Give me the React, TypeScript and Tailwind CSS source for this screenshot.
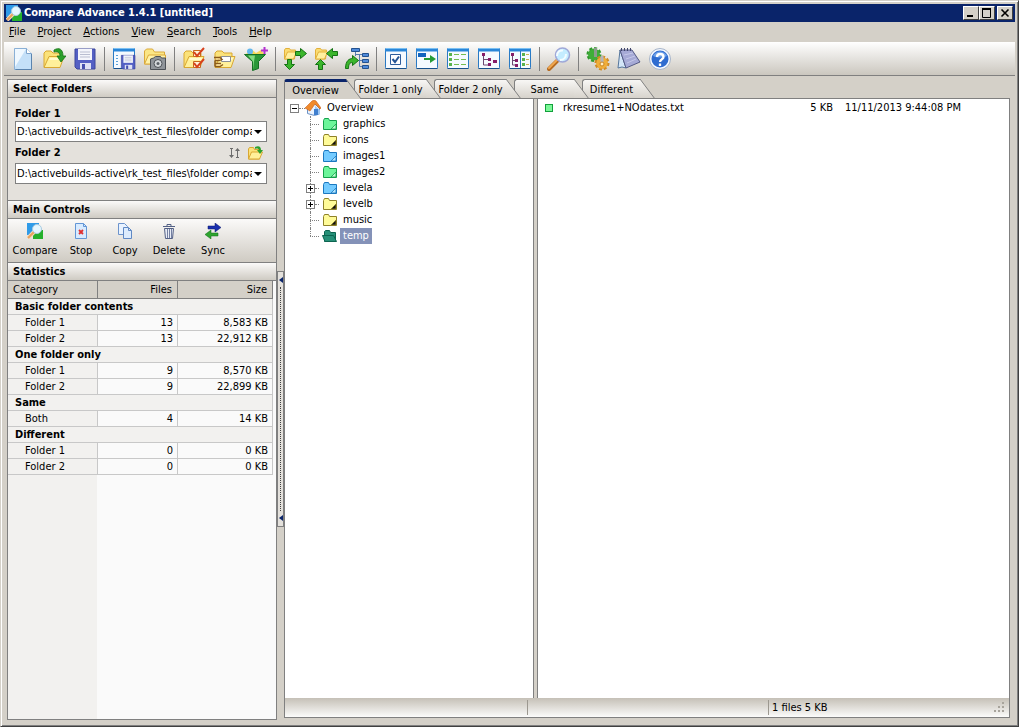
import type { ReactNode } from 'react'

interface IconProps {
  children: ReactNode
  size?: 'sm' | 'lg'
}

function Icon({ children, size = 'lg' }: IconProps) {
  return size === 'lg' ? (
    <svg viewBox="0 0 24 24" className="w-6 h-6 shrink-0" fill="none" aria-hidden="true">
      {children}
    </svg>
  ) : (
    <svg viewBox="0 0 16 16" className="w-4 h-4 shrink-0" fill="none" aria-hidden="true">
      {children}
    </svg>
  )
}

/* shared shapes */

function OpenFolder() {
  return (
    <>
      <path d="M2 20V6l2-2h5l2 2h8v4" fill="#fbe27a" stroke="#d9a832" />
      <path d="M2 20.500l5-11h15l-4 11z" fill="#fff09a" stroke="#d9a832" />
      <path d="M8 11h12l-1 2H7z" fill="#fffbd0" />
    </>
  )
}

function SmallFolder() {
  return (
    <>
      <path d="M1.500 12V3l1-1.500h4l1 1.500h5l-1 9z" fill="#fbdc72" stroke="#e2b03a" />
      <path d="M1.500 12l3-7h9l-3 7z" fill="#fff0a0" stroke="#e2b03a" />
    </>
  )
}

function WindowFrame() {
  return (
    <>
      <rect x="1.500" y="1.500" width="21" height="20" rx="1" fill="#f5faff" stroke="#2a7ac4" />
      <path d="M1 3h22" stroke="#2a86d8" strokeWidth="3" />
      <path d="M2 1.500h20" stroke="#7cc0f2" />
      <path d="M1.500 21.500h21" stroke="#16508c" />
    </>
  )
}

function Floppy() {
  return (
    <>
      <path d="M2 2h20v20H4l-2-2z" fill="#5460c4" stroke="#3c469c" />
      <path d="M5 2h14v11H5z" fill="#f4f5fb" />
      <path d="M7 5h10M7 7.500h10M7 10h10" stroke="#b9bdd0" />
      <path d="M7 16h11v6H7z" fill="#dfe2f4" />
      <path d="M9 17h3v5H9z" fill="#454fae" />
    </>
  )
}

function CompareArt() {
  return (
    <>
      <path d="M0 0h12v12H0z" fill="#2f9be8" />
      <path d="M6 7h10v9H6z" fill="#25b02c" />
      <path d="M1 15l6-6" stroke="#f3d9bd" strokeWidth="4" />
      <path d="M1 15l6-6" stroke="#e8a35c" strokeWidth="2" />
      <circle cx="10" cy="6" r="4.500" fill="#e4f6ff" stroke="#a9cbe0" />
    </>
  )
}

const ARROW_RIGHT = 'M12.500 4.500h5v-3l6 5-6 5v-3h-5z'
const ARROW_LEFT = 'M23.500 4.500h-5v-3l-6 5 6 5v-3h5z'
const ARROW_DOWN = 'M4.500 12.500h4v5h3l-5 5-5-5h3z'
const ARROW_UP = 'M4.500 22.500h4v-5h3l-5-5-5 5h3z'

interface Tool {
  label: string
  art: ReactNode
}

const TOOL_GROUPS: Tool[][] = [
  [
    {
      label: 'New',
      art: (
        <>
          <path d="M3.500 1.500h12l5 5v16h-17z" fill="#c4e0f8" stroke="#8ab0d6" />
          <path d="M4 2h11l-11 18z" fill="#eff8ff" />
          <path d="M15.500 1.500v5h5" fill="#fff" stroke="#7fa5cc" />
          <path d="M20.500 7v15.500h-16" stroke="#5b84ae" />
        </>
      ),
    },
    {
      label: 'Open',
      art: (
        <>
          <OpenFolder />
          <path d="M12 3c5-3 9-1 9 6h3l-5 6-4-6h3c0-3-2-5-6-4z" fill="#2ba02b" stroke="#167316" strokeWidth="0.800" />
        </>
      ),
    },
    { label: 'Save', art: <Floppy /> },
  ],
  [
    {
      label: 'Save project',
      art: (
        <>
          <WindowFrame />
          <path d="M4 8.500h2M4 11.500h2M4 14.500h2M4 17.500h2" stroke="#59a0d8" />
          <g transform="translate(8 7) scale(0.680)">
            <Floppy />
          </g>
        </>
      ),
    },
    {
      label: 'Snapshot',
      art: (
        <>
          <path d="M1.500 17V4l2-2h6l2 3h10v12z" fill="#fbe685" stroke="#dba93a" />
          <path d="M1.500 17l4-9h17v9z" fill="#fff2a8" stroke="#dba93a" />
          <path d="M7.500 12l3-1 2-1.500h5l1 1.500h4v11.500h-15z" fill="#90959a" stroke="#4c5156" />
          <circle cx="15" cy="16.500" r="4" fill="#d3d7da" stroke="#4c5156" />
          <circle cx="15" cy="16.500" r="1.500" fill="#5a6066" />
        </>
      ),
    },
  ],
  [
    {
      label: 'Select files',
      art: (
        <>
          <OpenFolder />
          <path d="M11.500 3.500h7v6h-7zM11.500 14.500h7v6h-7z" fill="#fff4d8" stroke="#c8681c" />
          <path d="M12 5l3 4 7-8M12 16l3 4 7-8" stroke="#d8401c" strokeWidth="2" />
        </>
      ),
    },
    {
      label: 'Rename',
      art: (
        <>
          <OpenFolder />
          <path d="M8.500 9.500h9v5h-9z" fill="#fff" stroke="#8b8f96" />
          <path d="M1 10.500h6l2 2-3 1H2M2 13.500v6M2 16.500h6M2 19.500h5l3-2" stroke="#8a5a1c" strokeWidth="1.400" />
          <path d="M3 11.500h4v1H3zM3 17.500h4v1H3z" fill="#f8d8a0" />
        </>
      ),
    },
    {
      label: 'Filter',
      art: (
        <>
          <path d="M2 7l5-5 5 4 5-3 4 5z" fill="#f5d858" />
          <circle cx="6" cy="4.500" r="3" fill="#65b8ee" />
          <path d="M0.500 7.500h21l-7 7v7l-6 2v-9z" fill="#2a9838" stroke="#147024" />
          <path d="M4 8.500h7l-1 6v8l-1-8z" fill="#83dc83" />
          <path d="M20.500 0v7M17 3.500h7" stroke="#b330cf" strokeWidth="2" />
        </>
      ),
    },
  ],
  [
    {
      label: 'Copy right',
      art: (
        <>
          <SmallFolder />
          <path d={ARROW_RIGHT} fill="#3bb52c" stroke="#157315" />
          <path d={ARROW_DOWN} fill="#3bb52c" stroke="#157315" />
        </>
      ),
    },
    {
      label: 'Copy left',
      art: (
        <>
          <SmallFolder />
          <path d={ARROW_LEFT} fill="#3bb52c" stroke="#157315" />
          <path d={ARROW_UP} fill="#3bb52c" stroke="#157315" />
        </>
      ),
    },
    {
      label: 'Go to folder',
      art: (
        <>
          <path d="M10.500 4v5M10.500 7.500h7M13 13.500h4M14.500 7.500v12h3" stroke="#587cae" />
          <path d="M6.500 1.500h8v3h-8zM17.500 6.500h6v3h-6zM17.500 12.500h6v3h-6zM17.500 18.500h6v3h-6z" fill="#4f8ada" stroke="#23528f" />
          <path d="M0.500 21.500c0-8 4-10 7-10v-3l6 5-6 5v-3c-3 0-4 2-4 6z" fill="#3bb52c" stroke="#157315" />
        </>
      ),
    },
  ],
  [
    {
      label: 'Options view',
      art: (
        <>
          <WindowFrame />
          <path d="M6.500 7.500h10v10h-10z" fill="#fff" stroke="#2e5d9c" />
          <path d="M8.500 12l2.500 3 4-5.500" stroke="#245494" strokeWidth="2" />
        </>
      ),
    },
    {
      label: 'Sync view',
      art: (
        <>
          <WindowFrame />
          <path d="M3 6h8v4H3z" fill="#1264be" />
          <path d="M9 11h6V8l6 4-6 4v-3H9z" fill="#259b35" />
        </>
      ),
    },
    {
      label: 'List view',
      art: (
        <>
          <WindowFrame />
          <path d="M3 6h3v3H3zM3 11h3v3H3zM3 16h3v3H3z" fill="#58b34e" />
          <path d="M8 7.500h5M15 7.500h5M8 12.500h5M15 12.500h5M8 17.500h5M15 17.500h5" stroke="#74bd50" />
        </>
      ),
    },
    {
      label: 'Tree view',
      art: (
        <>
          <WindowFrame />
          <path d="M6.500 9v9h5M6.500 12.500h6" stroke="#6d4771" />
          <path d="M5 6h3v3H5zM11 11h3v3h-3zM11 16h3v3h-3zM16 13h4v3h-4z" fill="#851d69" />
        </>
      ),
    },
    {
      label: 'Split view',
      art: (
        <>
          <WindowFrame />
          <path d="M4.500 8v10h3M4.500 13.500h3" stroke="#6d4771" />
          <path d="M3 6h3v3H3zM7 12h3v3H7zM7 17h3v3H7z" fill="#851d69" />
          <path d="M12.500 4v17" stroke="#2a7ac4" />
          <path d="M14 6h3v3h-3zM14 11h3v3h-3zM14 16h3v3h-3z" fill="#58b34e" />
          <path d="M18 7.500h3M18 12.500h3M18 17.500h3" stroke="#c7b44b" />
        </>
      ),
    },
  ],
  [
    {
      label: 'Find',
      art: (
        <>
          <path d="M2 22l8-8" stroke="#b66b20" strokeWidth="4" strokeLinecap="round" />
          <path d="M2 21l8-8" stroke="#f0a850" strokeWidth="2" strokeLinecap="round" />
          <circle cx="15.500" cy="8" r="7" fill="#c4ecff" stroke="#a0a8d8" strokeWidth="1.500" />
          <path d="M10 9c0-4 3-6 6-5.500M13 13c4 0 6-3 6-6" stroke="#f4fcff" strokeWidth="2" />
        </>
      ),
    },
  ],
  [
    {
      label: 'Settings',
      art: (
        <>
          <circle cx="8" cy="7.500" r="6" fill="#3fae38" />
          <circle cx="8" cy="7.500" r="6.500" stroke="#2f9a2c" strokeWidth="2" strokeDasharray="3 2" />
          <path d="M8 1h3v9H8z" fill="#8f9a90" />
          <circle cx="16" cy="16" r="6" fill="#f0ae3a" />
          <circle cx="16" cy="16" r="6.500" stroke="#d18c24" strokeWidth="2" strokeDasharray="3 2" />
          <path d="M14.500 9h3v7h-3z" fill="#b4b5bc" />
          <circle cx="16" cy="17" r="2" fill="#fff0c4" stroke="#cb8420" />
        </>
      ),
    },
    {
      label: 'Notes',
      art: (
        <>
          <path d="M3 3L1 21l4-1 4 1z" fill="#d3e6f8" stroke="#56769c" />
          <path d="M3 3h12l8 12-14 6z" fill="#a6aad6" stroke="#555b85" />
          <path d="M4.500 1v3M7.500 1v3M10.500 1v3M13.500 1v3" stroke="#40466b" />
          <path d="M7 8l9-2M9 12l9-3M10 16l9-4" stroke="#c4c8e8" />
        </>
      ),
    },
    {
      label: 'Help',
      art: (
        <>
          <circle cx="12" cy="12" r="10.500" fill="#f5f9ff" stroke="#a6b4ca" />
          <circle cx="12" cy="12" r="8.500" fill="#2f6cd0" />
          <path d="M5 9c3-6 11-6 14 0-5 2-9 2-14 0z" fill="#6fa2ea" />
          <path d="M9 10c0-4 6.500-4 6.500 0 0 2.500-3.500 2-3.500 5M12 16.500v2.500" stroke="#fff" strokeWidth="2.300" />
        </>
      ),
    },
  ],
]

const MENU_ITEMS = ['File', 'Project', 'Actions', 'View', 'Search', 'Tools', 'Help']

const CONTROLS: Tool[] = [
  { label: 'Compare', art: <CompareArt /> },
  {
    label: 'Stop',
    art: (
      <>
        <path d="M2.500 0.500h8l3 3v12h-11z" fill="#d8ebff" stroke="#6396d6" />
        <path d="M10.500 0.500v3h3" stroke="#6396d6" />
        <path d="M6 7l4 4M10 7l-4 4" stroke="#e03030" strokeWidth="1.800" />
      </>
    ),
  },
  {
    label: 'Copy',
    art: (
      <>
        <path d="M1.500 0.500h6l3 3v8h-9z" fill="#e8f2ff" stroke="#6c93cc" />
        <path d="M6.500 4.500h5l3 3v8h-8z" fill="#dcebfd" stroke="#5f88c4" />
        <path d="M11.500 4.500v3h3" stroke="#5f88c4" />
      </>
    ),
  },
  {
    label: 'Delete',
    art: (
      <>
        <path d="M2 3.500h12M6 3V1.500h4V3" stroke="#536085" />
        <path d="M3.500 5.500h9l-1 10h-7z" fill="#e8ecf5" stroke="#536085" />
        <path d="M6.500 6v9M8.500 6v9M10.500 6v9" stroke="#7480a2" />
      </>
    ),
  },
  {
    label: 'Sync',
    art: (
      <>
        <path d="M3 3h7V0l6 4.500L10 9V6H3z" fill="#1a2fae" stroke="#0b1668" strokeWidth="0.500" />
        <path d="M13 10H6V7l-6 4.500L6 16v-3h7z" fill="#2fa42f" stroke="#0f6a18" strokeWidth="0.500" />
      </>
    ),
  },
]

interface StatRow {
  name: string
  files: string
  size: string
}

const STATS: { title: string; rows: StatRow[] }[] = [
  {
    title: 'Basic folder contents',
    rows: [
      { name: 'Folder 1', files: '13', size: '8,583 KB' },
      { name: 'Folder 2', files: '13', size: '22,912 KB' },
    ],
  },
  {
    title: 'One folder only',
    rows: [
      { name: 'Folder 1', files: '9', size: '8,570 KB' },
      { name: 'Folder 2', files: '9', size: '22,899 KB' },
    ],
  },
  { title: 'Same', rows: [{ name: 'Both', files: '4', size: '14 KB' }] },
  {
    title: 'Different',
    rows: [
      { name: 'Folder 1', files: '0', size: '0 KB' },
      { name: 'Folder 2', files: '0', size: '0 KB' },
    ],
  },
]

const TABS = [
  { label: 'Overview', width: 'w-[62px]', layer: 'z-50' },
  { label: 'Folder 1 only', width: 'w-[72px]', layer: 'z-40' },
  { label: 'Folder 2 only', width: 'w-[72px]', layer: 'z-30' },
  { label: 'Same', width: 'w-[60px]', layer: 'z-20' },
  { label: 'Different', width: 'w-[58px]', layer: 'z-10' },
]

type FolderColor = 'green' | 'blue' | 'yellow' | 'teal'

const FOLDER_COLORS: Record<FolderColor, { fill: string; stroke: string; corner: string }> = {
  green: { fill: '#6cf59a', stroke: '#15a04c', corner: '#b8ffd0' },
  blue: { fill: '#74cbff', stroke: '#1b78c0', corner: '#b6e6ff' },
  yellow: { fill: '#fffb98', stroke: '#8f8228', corner: '#111111' },
  teal: { fill: '#279078', stroke: '#0d6450', corner: '#279078' },
}

const FOLDERS: { name: string; color: FolderColor; expandable?: boolean }[] = [
  { name: 'graphics', color: 'green' },
  { name: 'icons', color: 'yellow' },
  { name: 'images1', color: 'blue' },
  { name: 'images2', color: 'green' },
  { name: 'levela', color: 'blue', expandable: true },
  { name: 'levelb', color: 'yellow', expandable: true },
  { name: 'music', color: 'yellow' },
  { name: 'temp', color: 'teal' },
]

function FolderIcon({ color }: { color: FolderColor }) {
  const c = FOLDER_COLORS[color]
  return (
    <Icon size="sm">
      {color === 'teal' ? (
        <>
          <path d="M2.500 13.500v-10l1-1h4l1 2h5v9z" fill={c.fill} stroke={c.stroke} />
          <path d="M3 13.500l-2.500-6h11l3 6z" fill={c.fill} stroke={c.stroke} />
        </>
      ) : (
        <>
          <path d="M1.500 13.500v-9l1-2h4l1 2h7v9z" fill={c.fill} stroke={c.stroke} />
          <path d="M14 8v5H9z" fill={c.corner} stroke={c.stroke} strokeWidth="0.800" />
        </>
      )}
    </Icon>
  )
}

function Expander({ open = false }: { open?: boolean }) {
  return (
    <button
      aria-label={open ? 'Collapse' : 'Expand'}
      className="w-[9px] h-[9px] shrink-0 border border-[#808080] bg-white relative z-10"
    >
      <svg viewBox="0 0 7 7" className="w-[7px] h-[7px] block" aria-hidden="true">
        <path d={open ? 'M1 3.500h5' : 'M1 3.500h5M3.500 1v5'} stroke="#000" />
      </svg>
    </button>
  )
}

function Caption({ children }: { children: ReactNode }) {
  return (
    <h2 className="h-[18px] shrink-0 pl-[5px] flex items-center font-bold border-b border-[#808080] bg-linear-to-b from-[#fbfaf9] to-[#cfcbc3]">
      {children}
    </h2>
  )
}

function FolderSelect({ id }: { id: string }) {
  return (
    <div className="relative">
      <select
        id={id}
        className="block w-full h-[21px] pl-px pr-[14px] appearance-none border border-[#808080] bg-white overflow-hidden text-clip"
      >
        <option>D:\activebuilds-active\rk_test_files\folder compa</option>
      </select>
      <svg viewBox="0 0 8 4" className="absolute right-[5px] top-[9px] w-2 h-1 pointer-events-none" aria-hidden="true">
        <path d="M0 0h8L4 4z" fill="#000" />
      </svg>
    </div>
  )
}

function TitleBar() {
  const button =
    'w-4 h-[14px] bg-[#d4d0c8] border border-t-white border-l-white border-r-[#404040] border-b-[#404040] flex items-center justify-center'
  return (
    <header className="h-[18px] shrink-0 px-[2px] flex items-center bg-[#0a246a] text-white">
      <Icon size="sm">
        <CompareArt />
      </Icon>
      <h1 className="pl-[2px] font-bold whitespace-nowrap">Compare Advance 1.4.1 [untitled]</h1>
      <div className="ml-auto flex">
        <button aria-label="Minimize" className={button}>
          <svg viewBox="0 0 12 10" className="w-3 h-[10px]">
            <path d="M2 8h6" stroke="#000" strokeWidth="2" />
          </svg>
        </button>
        <button aria-label="Maximize" className={button}>
          <svg viewBox="0 0 12 10" className="w-3 h-[10px]" fill="none">
            <path d="M1.500 1v8.500h8V1" stroke="#000" />
            <path d="M1 1h9" stroke="#000" strokeWidth="2" />
          </svg>
        </button>
        <button aria-label="Close" className={`${button} ml-[2px]`}>
          <svg viewBox="0 0 12 10" className="w-3 h-[10px]">
            <path d="M2.500 1.500l7 7M9.500 1.500l-7 7" stroke="#000" strokeWidth="1.600" />
          </svg>
        </button>
      </div>
    </header>
  )
}

function SidePanel() {
  return (
    <aside className="w-[270px] shrink-0 flex flex-col border border-[#808080] bg-[#fafafa]">
      <Caption>Select Folders</Caption>
      <div className="h-[102px] shrink-0 pl-[7px] pr-[9px] pt-[9px] bg-[#e4e1dc]">
        <label htmlFor="folder1" className="block h-[14px] leading-[14px] font-bold">
          Folder 1
        </label>
        <FolderSelect id="folder1" />
        <div className="h-[21px] pt-px pr-1 flex items-center">
          <label htmlFor="folder2" className="font-bold">
            Folder 2
          </label>
          <button aria-label="Swap folders" className="ml-auto mr-1">
            <Icon size="sm">
              <path d="M4.500 3v8M10.500 5v8" stroke="#6c6c6c" />
              <path d="M2 10h5l-2.500 3zM8 6h5l-2.500-3zM3 3h3v1H3zM9 12h3v1H9z" fill="#6c6c6c" />
            </Icon>
          </button>
          <button aria-label="Browse">
            <Icon size="sm">
              <path d="M1.500 14V4l1-1.500h4l1 2h5V14z" fill="#fbe27a" stroke="#d9a832" />
              <path d="M1.500 14l3-7h11l-3 7z" fill="#fff09a" stroke="#d9a832" />
              <path d="M8 2c4-2 6 0 6 3h2l-3 4-3-4h2c0-1-2-2-4-1z" fill="#2ba02b" />
            </Icon>
          </button>
        </div>
        <FolderSelect id="folder2" />
      </div>
      <div className="border-t border-[#808080]">
        <Caption>Main Controls</Caption>
      </div>
      <div className="h-[43px] shrink-0 px-[3px] flex bg-linear-to-b from-[#fbfaf9] to-[#cfcbc3]">
        {CONTROLS.map(({ label, art }) => (
          <button key={label} className="w-11 first:w-12 pt-1 flex flex-col items-center gap-1">
            <Icon size="sm">{art}</Icon>
            <span>{label}</span>
          </button>
        ))}
      </div>
      <div className="border-t border-[#808080]">
        <Caption>Statistics</Caption>
      </div>
      <div className="grow pr-[3px] bg-[linear-gradient(to_right,#f2f1ef_89px,#fafafa_89px)]">
        <table className="w-full table-fixed border-separate border-spacing-0">
          <thead>
            <tr className="h-[18px] bg-[#d4d0c8]">
              <th className="w-[90px] p-0 pl-[5px] text-left font-normal border-r border-b border-[#808080]">Category</th>
              <th className="w-20 p-0 pr-[5px] text-right font-normal border-r border-b border-[#808080]">Files</th>
              <th className="p-0 pr-[5px] text-right font-normal border-r border-b border-[#808080]">Size</th>
            </tr>
          </thead>
          {STATS.map((group) => (
            <tbody key={group.title}>
              <tr className="h-4 bg-[#f2f1ef]">
                <th colSpan={3} className="p-0 pl-[7px] leading-[15px] text-left border-b border-r border-[#c8c8c8]">
                  {group.title}
                </th>
              </tr>
              {group.rows.map((row) => (
                <tr key={row.name} className="h-4 leading-[15px]">
                  <td className="p-0 pl-[17px] border-b border-r border-[#c8c8c8]">{row.name}</td>
                  <td className="p-0 pr-1 text-right border-b border-r border-[#c8c8c8]">{row.files}</td>
                  <td className="p-0 pr-1 text-right border-b border-r border-[#c8c8c8]">{row.size}</td>
                </tr>
              ))}
            </tbody>
          ))}
        </table>
      </div>
    </aside>
  )
}

function Splitter() {
  return (
    <div className="w-[7px] shrink-0 pt-48 flex flex-col">
      <div className="h-64 flex flex-col justify-between items-center border border-[#808080] bg-[#e4e1dc]">
        <svg viewBox="0 0 4 6" className="mt-[5px] w-1 h-[6px]" aria-hidden="true">
          <path d="M4 0v6L0 3z" fill="#0a246a" />
        </svg>
        <div className="grow my-1 w-px border-l border-dotted border-[#404040]" />
        <svg viewBox="0 0 4 6" className="mb-[5px] w-1 h-[6px]" aria-hidden="true">
          <path d="M4 0v6L0 3z" fill="#0a246a" />
        </svg>
      </div>
    </div>
  )
}

function TabStrip() {
  return (
    <div role="tablist" className="h-5 shrink-0 flex items-stretch">
      {TABS.map(({ label, width, layer }, i) => {
        const active = i === 0
        return (
          <div key={label} className={`${layer} relative flex -mr-[7px]`}>
            <button
              role="tab"
              aria-selected={active}
              className={`${width} whitespace-nowrap rounded-tl-[3px] border-l border-[#808080] ${
                active
                  ? 'bg-[#d4d0c8] border-t-3 border-t-[#0a246a]'
                  : 'border-t border-b bg-linear-to-b from-[#f8f7f5] to-[#d6d2cb] pt-[2px]'
              }`}
            >
              {label}
            </button>
            <svg viewBox="0 0 15 20" className="w-[15px] h-5 shrink-0" fill="none" aria-hidden="true">
              <defs>
                <linearGradient id="tabFace" x1="0" y1="0" x2="0" y2="1">
                  <stop offset="0" stopColor="#f8f7f5" />
                  <stop offset="1" stopColor="#d6d2cb" />
                </linearGradient>
              </defs>
              <path d="M0 0l15 20H0z" fill={active ? '#d4d0c8' : 'url(#tabFace)'} />
              {active ? <path d="M0 0l2 3H0z" fill="#0a246a" /> : <path d="M0 19.500h15" stroke="#808080" />}
              <path d="M0 0l15 20" stroke="#808080" />
            </svg>
          </div>
        )
      })}
      <div className="grow border-b border-[#808080]" />
    </div>
  )
}

function FolderTree() {
  return (
    <nav className="w-[249px] shrink-0 pt-px border-r border-[#808080] bg-white">
      <div className="h-4 pl-[5px] flex items-center">
        <Expander open />
        <span className="w-[6px] border-t border-dotted border-[#808080]" />
        <Icon size="sm">
          <path d="M2.500 8l6-5 6 5v6l-5 1.500-7-2z" fill="#e9f3ff" stroke="#6b91c4" />
          <path d="M10 6l5 4v4l-5 1.500z" fill="#9fc6f2" />
          <path d="M0 8l7-7 2-1 2 1 5 7-1 1-5-5-5 7z" fill="#f08a2c" stroke="#c8601c" strokeWidth="0.600" />
          <path d="M9 9h4v6H9z" fill="#3f7fce" />
        </Icon>
        <span className="pl-[6px]">Overview</span>
      </div>
      <ul className="pl-[21px]">
        {FOLDERS.map(({ name, color, expandable }, i) => (
          <li key={name} className="h-4 flex items-center">
            <span className="w-4 h-4 relative flex items-center">
              <span
                className={`absolute left-1 top-0 border-l border-dotted border-[#808080] ${
                  i === FOLDERS.length - 1 ? 'h-2' : 'h-4'
                }`}
              />
              {expandable ? (
                <>
                  <Expander />
                  <span className="w-1 border-t border-dotted border-[#808080]" />
                </>
              ) : (
                <span className="ml-1 w-[9px] border-t border-dotted border-[#808080]" />
              )}
            </span>
            <FolderIcon color={color} />
            <a
              href="#"
              className={
                name === 'temp' ? 'ml-[2px] px-[3px] h-4 bg-[#8492b8] text-white' : 'ml-[2px] px-[3px] h-4'
              }
            >
              {name}
            </a>
          </li>
        ))}
      </ul>
    </nav>
  )
}

function StatusBar() {
  return (
    <footer className="h-5 shrink-0 py-[2px] flex items-center bg-linear-to-b from-[#c5c0b7] to-[#fcfcfb] border-b border-[#808080]">
      <div className="w-[243px] h-full border-r border-[#9c9890]" />
      <div className="grow h-full border-r border-[#9c9890]" />
      <div className="w-60 pl-[3px] flex items-center justify-between">
        <span>1 files 5 KB</span>
        <svg viewBox="0 0 12 12" className="w-3 h-3 mr-[3px]" aria-hidden="true">
          <path d="M8 0h2v2H8zM8 4h2v2H8zM4 4h2v2H4zM8 8h2v2H8zM4 8h2v2H4zM0 8h2v2H0z" fill="#a8a49c" />
        </svg>
      </div>
    </footer>
  )
}

export default function App() {
  return (
    <div className="h-screen min-h-[560px] flex flex-col p-[3px] border border-t-[#d4d0c8] border-l-[#d4d0c8] border-r-[#404040] border-b-[#404040] shadow-[inset_1px_1px_0_#ffffff,inset_-1px_-1px_0_#808080] bg-[#d4d0c8] text-black text-[11px] leading-4 font-['Tahoma','DejaVu_Sans_Condensed','DejaVu_Sans',sans-serif] overflow-hidden">
      <TitleBar />
      <nav className="h-5 shrink-0 pl-[5px] flex items-center gap-3">
        {MENU_ITEMS.map((item) => (
          <button key={item}>
            <span className="underline">{item[0]}</span>
            {item.slice(1)}
          </button>
        ))}
      </nav>
      <div
        role="toolbar"
        className="h-[34px] shrink-0 pl-[3px] flex items-center border-b border-[#808080] bg-linear-to-b from-white to-[#cbc7bf]"
      >
        {TOOL_GROUPS.map((group, i) => (
          <div key={group[0].label} className="flex items-center">
            {i > 0 && <span className="w-px h-6 ml-1 mr-[3px] bg-[#808080]" />}
            {group.map(({ label, art }) => (
              <button key={label} aria-label={label} className="w-[31px] h-7 flex items-center justify-center">
                <Icon>{art}</Icon>
              </button>
            ))}
          </div>
        ))}
      </div>
      <div className="grow min-h-0 flex pt-[3px] pl-[3px] pr-[5px] pb-[3px]">
        <SidePanel />
        <Splitter />
        <main className="grow min-w-0 mb-[2px] flex flex-col">
          <TabStrip />
          <div className="grow min-h-0 flex flex-col border-x border-[#808080]">
            <div className="grow min-h-0 flex">
              <FolderTree />
              <div className="w-[3px] shrink-0" />
              <section className="grow pt-px border-l border-[#808080] bg-white">
                <div className="h-4 pl-[7px] flex items-center">
                  <span className="w-2 h-2 border border-[#12a03c] bg-[#7cf898]" />
                  <a href="#" className="w-50 pl-[10px]">
                    rkresume1+NOdates.txt
                  </a>
                  <span className="w-20 text-right">5 KB</span>
                  <span className="pl-3 whitespace-nowrap">11/11/2013 9:44:08 PM</span>
                </div>
              </section>
            </div>
            <StatusBar />
          </div>
        </main>
      </div>
    </div>
  )
}
